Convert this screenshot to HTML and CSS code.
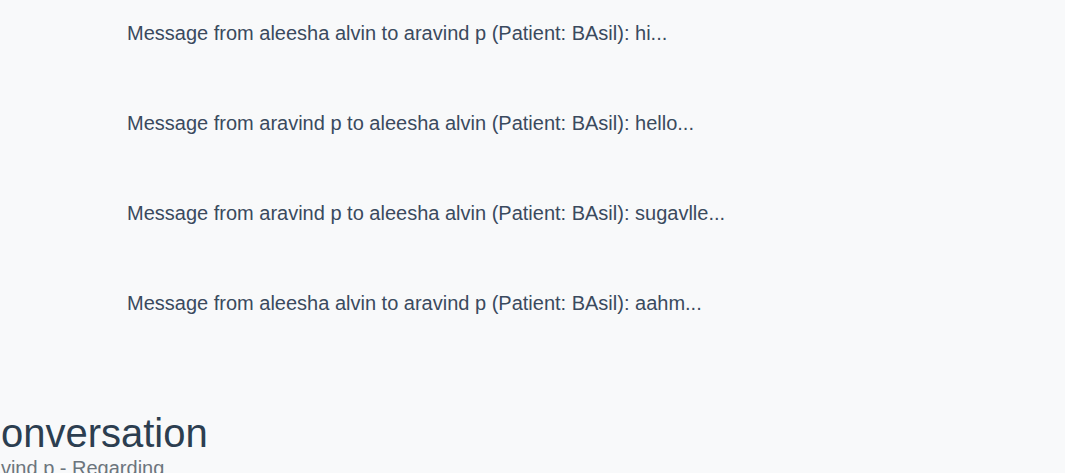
FILE: index.html
```html
<!DOCTYPE html>
<html lang="en">
<head>
<meta charset="utf-8">
<title>Messages</title>
<link rel="stylesheet" href="styles.css">
</head>
<body>
<div class="page">
  <ul class="message-list">
    <li class="message-row">Message from aleesha alvin to aravind p (Patient: BAsil): hi...</li>
    <li class="message-row">Message from aravind p to aleesha alvin (Patient: BAsil): hello...</li>
    <li class="message-row">Message from aravind p to aleesha alvin (Patient: BAsil): sugavlle...</li>
    <li class="message-row">Message from aleesha alvin to aravind p (Patient: BAsil): aahm...</li>
  </ul>
  <section class="conversation">
    <h1 class="conversation-title">Conversation</h1>
    <p class="conversation-sub">aravind p - Regarding</p>
  </section>
</div>
</body>
</html>
```

FILE: styles.css
```css
html, body {
  margin: 0;
  padding: 0;
  background: #f8f9fa;
  overflow: hidden;
}
body {
  font-family: "Liberation Sans", Arial, sans-serif;
  color: #34495e;
}
.page {
  margin-left: -28px;
}
.message-list {
  list-style: none;
  margin: -12px 0 0 0;
  padding: 0 0 0 155px;
}
.message-row {
  font-size: 20px;
  line-height: 23px;
  padding: 33.5px 0;
  color: #3a4a5e;
}
.conversation {
  margin-top: 61px;
}
.conversation-title {
  margin: 0;
  font-size: 40px;
  line-height: 48px;
  font-weight: 400;
  color: #2c3e50;
}
.conversation-sub {
  margin: 0;
  font-size: 20px;
  line-height: 23px;
  color: #6c757d;
}
```
